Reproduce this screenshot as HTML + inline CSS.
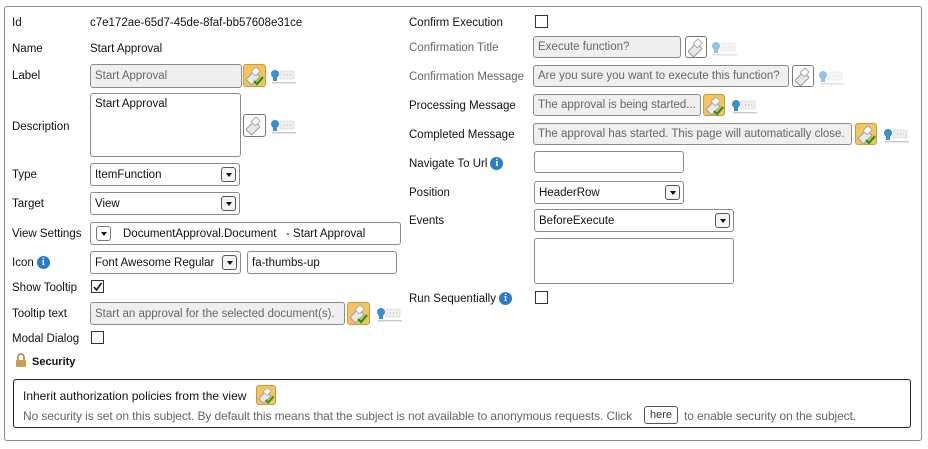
<!DOCTYPE html>
<html><head><meta charset="utf-8"><style>
*{box-sizing:border-box;margin:0;padding:0}
body{width:928px;height:449px;background:#fff;font-family:"Liberation Sans",sans-serif;font-size:11.5px;color:#111;position:relative;overflow:hidden}
.a{position:absolute}
.l{position:absolute;white-space:nowrap;line-height:14px;margin-top:1px}
.g{color:#666}
.in{position:absolute;border:1px solid #8a8a8a;border-radius:3px;background:#fff;padding:0 4px;display:flex;align-items:center;white-space:nowrap;overflow:hidden}
.ro{background:#efefef;color:#666}
.dd{position:absolute;right:3px;top:3px;width:15px;height:15px;border:1px solid #555;border-radius:3px;background:#f4f4f4}
.dd:after{content:"";position:absolute;left:4px;top:5px;border-left:3px solid transparent;border-right:3px solid transparent;border-top:4px solid #111}
.cb{position:absolute;width:13px;height:13px;border:1px solid #333;background:#fff}
.btn{position:absolute;width:23px;height:23px;border:1px solid #777;border-radius:3px;background:#fff}
.on{background:#f6c45f;border-color:#c99a3a}
.info{display:inline-block;width:13px;height:13px;border-radius:50%;background:#2a7cc7;color:#fff;font-size:10px;font-weight:bold;text-align:center;line-height:13px;font-family:"Liberation Serif",serif;vertical-align:top;margin-left:3px}
</style></head><body>
<svg width="0" height="0" style="position:absolute"><defs>
<g id="er"><rect x="5" y="7" width="8" height="12" rx="1" transform="rotate(45 9 13)" fill="#e8e8e8" stroke="#999"/><rect x="9" y="3" width="6" height="7" rx="1" transform="rotate(45 12 6)" fill="#fafafa" stroke="#aaa"/></g>
<g id="ck"><path d="M10 16 l3 3 l6 -7" stroke="#1a9a1a" stroke-width="2.2" fill="none"/></g>
<g id="bu"><circle cx="5" cy="6" r="4" fill="#3a8fd0"/><rect x="3" y="8" width="4" height="5" fill="#3a8fd0"/><rect x="10" y="3" width="14" height="8" rx="1" fill="#eee" stroke="#ccc" stroke-width=".6"/><path d="M14 7h1M17 7h1M20 7h1" stroke="#e0b040"/><rect x="2" y="14" width="24" height="1.5" fill="#ccc"/></g>
</defs></svg>
<div class="a" style="left:4px;top:6px;width:918px;height:435px;border:1px solid #8c8c8c;border-radius:3px"></div>

<div class="l" style="left:12px;top:15px">Id</div><div class="l" style="left:90px;top:15px">c7e172ae-65d7-45de-8faf-bb57608e31ce</div>
<div class="l" style="left:12px;top:41px">Name</div><div class="l" style="left:90px;top:41px">Start Approval</div>
<div class="l" style="left:12px;top:68px">Label</div>
<div class="in ro" style="left:90px;top:64px;width:152px;height:24px">Start Approval</div>
<div class="btn on" style="left:243px;top:64px"><svg width="23" height="23"><use href="#er"/><use href="#ck"/></svg></div>
<svg class="a" style="left:270px;top:68px" width="28" height="17"><use href="#bu"/></svg>
<div class="l" style="left:12px;top:119px">Description</div>
<div class="in" style="left:90px;top:93px;width:151px;height:64px;align-items:flex-start;padding-top:4px">Start Approval</div>
<div class="btn" style="left:243px;top:114px"><svg width="23" height="23"><use href="#er"/></svg></div>
<svg class="a" style="left:270px;top:118px" width="28" height="17"><use href="#bu"/></svg>

<div class="l" style="left:12px;top:167px">Type</div>
<div class="in" style="left:90px;top:163px;width:150px;height:23px">ItemFunction<span class="dd"></span></div>
<div class="l" style="left:12px;top:196px">Target</div>
<div class="in" style="left:90px;top:192px;width:150px;height:23px">View<span class="dd"></span></div>
<div class="l" style="left:12px;top:226px">View Settings</div>
<div class="in" style="left:90px;top:222px;width:311px;height:23px;padding-left:32px">DocumentApproval.Document &nbsp; - Start Approval<span class="dd" style="left:5px;right:auto;border-color:#777;background:#fff"></span></div>
<div class="l" style="left:12px;top:255px">Icon<span class="info">i</span></div>
<div class="in" style="left:90px;top:251px;width:151px;height:23px">Font Awesome Regular<span class="dd"></span></div>
<div class="in" style="left:247px;top:251px;width:150px;height:23px">fa-thumbs-up</div>
<div class="l" style="left:12px;top:280px">Show Tooltip</div>
<div class="cb" style="left:91px;top:280px"><svg width="11" height="11" style="position:absolute;left:0;top:0"><path d="M2 6 l2.5 3 l5 -7" stroke="#111" stroke-width="1.6" fill="none"/></svg></div>
<div class="l" style="left:12px;top:306px">Tooltip text</div>
<div class="in ro" style="left:90px;top:302px;width:255px;height:23px">Start an approval for the selected document(s).</div>
<div class="btn on" style="left:347px;top:302px"><svg width="23" height="23"><use href="#er"/><use href="#ck"/></svg></div>
<svg class="a" style="left:376px;top:306px" width="28" height="17"><use href="#bu"/></svg>
<div class="l" style="left:12px;top:331px">Modal Dialog</div>
<div class="cb" style="left:91px;top:331px"></div>
<svg class="a" style="left:15px;top:353px" width="12" height="15"><path d="M3 7 V4 a3 3 0 0 1 6 0 V7" stroke="#a08040" stroke-width="1.5" fill="none"/><rect x="1" y="7" width="10" height="7" rx="1" fill="#c9a050"/></svg>
<div class="l" style="left:32px;top:354px;font-weight:bold;font-size:11px">Security</div>

<div class="a" style="left:13px;top:379px;width:898px;height:49px;border:1px solid #222;border-radius:3px"></div>
<div class="l" style="left:23px;top:388px;font-size:12px">Inherit authorization policies from the view</div>
<div class="btn on" style="left:256px;top:385px;width:20px;height:20px"><svg width="20" height="20" viewBox="0 0 23 23"><use href="#er"/><use href="#ck"/></svg></div>
<div class="l g" style="left:23px;top:408px;font-size:12px;letter-spacing:-0.1px">No security is set on this subject. By default this means that the subject is not available to anonymous requests. Click</div>
<div class="a" style="left:644px;top:406px;width:34px;height:18px;border:1px solid #555;border-radius:3px;font-size:11px;line-height:16px;text-align:center;color:#333">here</div>
<div class="l g" style="left:684px;top:408px;font-size:12px;letter-spacing:-0.1px">to enable security on the subject.</div>

<div class="l" style="left:409px;top:15px">Confirm Execution</div>
<div class="cb" style="left:535px;top:15px"></div>
<div class="l g" style="left:409px;top:40px">Confirmation Title</div>
<div class="in ro" style="left:533px;top:36px;width:148px;height:22px">Execute function?</div>
<div class="btn" style="left:685px;top:36px;width:22px;height:22px"><svg width="22" height="22"><use href="#er"/></svg></div>
<svg class="a" style="left:711px;top:40px;opacity:.55" width="28" height="17"><use href="#bu"/></svg>
<div class="l g" style="left:409px;top:69px">Confirmation Message</div>
<div class="in ro" style="left:533px;top:65px;width:256px;height:22px">Are you sure you want to execute this function?</div>
<div class="btn" style="left:792px;top:65px;width:22px;height:22px"><svg width="22" height="22"><use href="#er"/></svg></div>
<svg class="a" style="left:818px;top:69px;opacity:.55" width="28" height="17"><use href="#bu"/></svg>
<div class="l" style="left:409px;top:98px">Processing Message</div>
<div class="in ro" style="left:533px;top:94px;width:168px;height:22px">The approval is being started...</div>
<div class="btn on" style="left:703px;top:94px;width:22px;height:22px"><svg width="22" height="22"><use href="#er"/><use href="#ck"/></svg></div>
<svg class="a" style="left:731px;top:98px" width="28" height="17"><use href="#bu"/></svg>
<div class="l" style="left:409px;top:127px">Completed Message</div>
<div class="in ro" style="left:533px;top:123px;width:319px;height:22px">The approval has started. This page will automatically close.</div>
<div class="btn on" style="left:855px;top:123px;width:22px;height:22px"><svg width="22" height="22"><use href="#er"/><use href="#ck"/></svg></div>
<svg class="a" style="left:883px;top:127px" width="28" height="17"><use href="#bu"/></svg>
<div class="l" style="left:409px;top:156px">Navigate To Url<span class="info">i</span></div>
<div class="in" style="left:534px;top:151px;width:150px;height:22px"></div>
<div class="l" style="left:409px;top:185px">Position</div>
<div class="in" style="left:534px;top:181px;width:150px;height:23px">HeaderRow<span class="dd"></span></div>
<div class="l" style="left:409px;top:213px">Events</div>
<div class="in" style="left:534px;top:209px;width:200px;height:23px">BeforeExecute<span class="dd"></span></div>
<div class="in" style="left:534px;top:238px;width:200px;height:46px"></div>
<div class="l" style="left:409px;top:291px">Run Sequentially<span class="info">i</span></div>
<div class="cb" style="left:535px;top:291px"></div>
</body></html>
